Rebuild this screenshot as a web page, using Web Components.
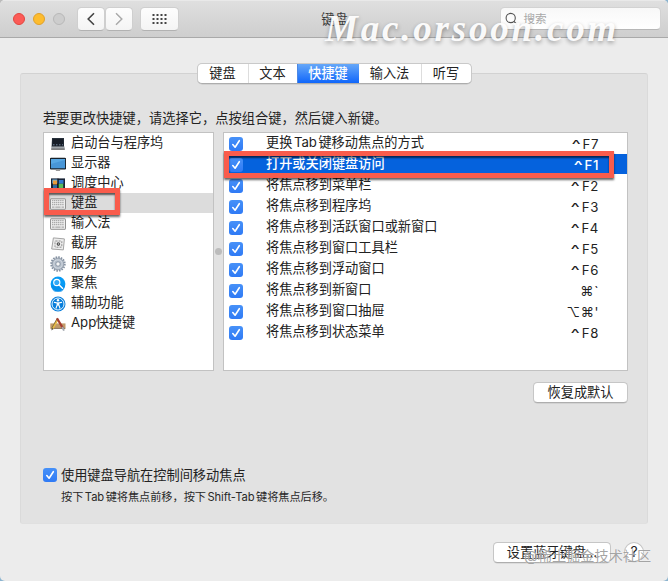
<!DOCTYPE html>
<html lang="zh-CN">
<head>
<meta charset="utf-8">
<title>键盘</title>
<style>
html,body{margin:0;width:668px;height:581px;overflow:hidden;background:#ececec}
body{font:13.2px/20px Inter,"Noto Sans CJK SC",sans-serif;color:#222;background:linear-gradient(135deg,#bbb 0 4px,transparent 4px),#8cb4cf}
</style>
</head>
<body>
<pref-window></pref-window>
<script>
const define=(name,html)=>{
  const t=document.createElement('template');t.innerHTML=html;
  customElements.define(name,class extends HTMLElement{
    constructor(){super();this.attachShadow({mode:'open'}).append(t.content.cloneNode(true));}
  });
};
const icons={
 launch:'<path d="M2 2h12v9H1.6z" fill="#27303b"/><path d="M2.8 3h10.4l.4 7H2.2z" fill="#171d27"/><path d="M1.3 10.5h13.4V13H1.3z" fill="#a1a6ab"/><path d="M3 8.8h1.5M6 8.8h1.5M9 8.8h1.5M12 8.8h1" stroke="#71839b"/><path d="M1.2 13.2h13.6" stroke="#444"/>',
 display:'<rect x=".4" y="2.4" width="15.2" height="10.5" rx=".6" fill="#58a8e4" stroke="#17212b" stroke-width="1.1"/><path d="M1 8l14-4v8H1z" fill="#3e8bcf" opacity=".6"/><path d="M6.5 13.5h3l.9 1.5H5.6z" fill="#999"/>',
 mission:'<rect x="1" y="2.4" width="14" height="11.5" fill="#182335"/><path d="M2.3 3.5h5.3v4H2.3z" fill="#75b8e1"/><path d="M3 4.6h4v4H3z" fill="#e99c3c"/><path d="M8.5 4h5v3.7h-5z" fill="#3178d2"/><path d="M3 9h4.2v3.5H3z" fill="#2d6ba4"/><path d="M8.4 7.8h4.8v4.7H8.4z" fill="#58bb5a"/><path d="M8 2.5v11" stroke="#0c1119"/>',
 keyboard:'<rect x=".5" y="2.8" width="15" height="10.5" rx=".5" fill="#eee" stroke="#929292"/><path d="M2 4.7h12M2 6.7h12M2 8.7h12" stroke="#aaa" stroke-width="1.2" stroke-dasharray="1.3 .6"/><path d="M2 11.2h2.5M5.3 11.2h5.3M11.5 11.2H14" stroke="#aaa" stroke-width="1.2"/>',
 shot:'<path d="M3.4 1.9l11 1-1.1 11-11.6-.9z" fill="#eee" stroke="#a4a4a4"/><rect x="5" y="5" width="6.8" height="6.2" rx=".6" fill="none" stroke="#777" stroke-width=".8" stroke-dasharray="2 1"/><circle cx="8.4" cy="8.1" r="1.8" fill="#555"/><path d="M8 8h1" stroke="#eee"/>',
 gear:'<circle cx="8" cy="8" r="6.7" fill="none" stroke="#8693a3" stroke-width="2" stroke-dasharray="1.6 1.03"/><circle cx="8" cy="8" r="5.8" fill="#b3bdc9" stroke="#8b97a6" stroke-width=".8"/><circle cx="8" cy="8" r="4.1" fill="none" stroke="#d0d7df"/><circle cx="8" cy="8" r="2.2" fill="#f4f5f6" stroke="#7c8999" stroke-width=".8"/>',
 spotlight:'<circle cx="8" cy="8" r="7.4" fill="#079bf5"/><path d="M1 9.5a7 7 0 0014 0z" fill="#0488e7" opacity=".6"/><circle cx="6.8" cy="6.5" r="3.1" fill="#32aaf7" stroke="#fff" stroke-width="1.1"/><path d="M9 8.8l3.5 3.5" stroke="#fff" stroke-width="1.5" stroke-linecap="round"/>',
 access:'<circle cx="8" cy="8" r="7.5" fill="#087edb"/><circle cx="8" cy="8" r="6" fill="none" stroke="#e8f6ff" stroke-width="1"/><circle cx="8" cy="4.3" r="1.2" fill="#fff"/><path d="M4.4 6.4l2.8.6v2L6 12.2M11.6 6.4L8.8 7v2L10 12.2" stroke="#fff" stroke-width="1.1" fill="none" stroke-linecap="round"/><path d="M7.1 6.6h1.8v3H7.1z" fill="#fff"/>',
 app:'<path d="M.3 7.4h15.2v5.2H.3z" fill="#c19b69"/><path d="M.8 12.4h14.4" stroke="#8a755c"/><path d="M7.8 3L2.4 12.8" stroke="#e8bd43" stroke-width="2.2"/><path d="M7.1 2.6L1.8 12" stroke="#5e4e37" stroke-width=".7"/><path d="M2.2 12l-1 2.4 2.3-1.4" fill="#3b3833"/><path d="M7 2.3l5.9 9.8" stroke="#a63d31" stroke-width="2.2"/><path d="M12.2 11l1.8 3.6" stroke="#a3a8af" stroke-width="1.9"/>'
};
customElements.define('pref-icon',class extends HTMLElement{
  connectedCallback(){this.attachShadow({mode:'open'}).innerHTML=`<style>:host{display:block;width:16px;height:16px;flex:none}svg{display:block}</style><svg width="16" height="16" viewBox="0 0 16 16">${icons[this.getAttribute('name')]}</svg>`;}
});
define('latin-run','<style>:host{display:inline;margin:0 1.5px}:host(:empty){margin:0 -.3px}</style><slot></slot>');
define('check-box','<style>:host{display:block;width:14px;height:14px;flex:none;border-radius:3px;background:linear-gradient(#4791f8,#2f7af5)}svg{display:block}</style><svg width="14" height="14" viewBox="0 0 14 14"><path d="M3.8 7.5l2.3 2.7 4.2-6.5" fill="none" stroke="#fff" stroke-width="1.6" stroke-linecap="round" stroke-linejoin="round"/></svg>');
define('push-button','<style>:host{display:flex;align-items:center;justify-content:center;box-sizing:border-box;height:21px;background:#fff;border:1px solid #c6c6c6;border-bottom-color:#aeaeae;border-radius:4.5px;box-shadow:0 .5px .5px #0002;white-space:nowrap;line-height:18px;padding-bottom:1px}</style><slot></slot>');
define('tool-button','<style>:host{display:flex;align-items:center;justify-content:center;box-sizing:border-box;height:24px;background:linear-gradient(#fdfdfd,#f4f4f4);border:1px solid #cfcfcf;border-bottom-color:#b2b2b2;border-radius:4.5px}</style><slot></slot>');
define('title-bar',`<style>
:host{display:flex;align-items:flex-start;box-sizing:border-box;height:38px;padding:6px 7px 0 13px;background:linear-gradient(#dfdfdf,#cecece);border-top:1px solid #e9e9e9;border-bottom:1px solid #a9a9a9}
i{width:12px;height:12px;box-sizing:border-box;border-radius:50%;margin:6px 8px 0 0;border:1px solid}
.r{background:#fc5b57;border-color:#e2463f}.y{background:#fdbc2e;border-color:#e0a02a}.g{background:#cdcdcd;border-color:#b8b8b8}
.back{width:28px;margin-left:4px}.next{width:28px}.all{width:39px;margin-left:7px}
svg{display:block}
.title{flex:1;text-align:center;color:#3d3d3d;line-height:24px;padding-right:10px}
.search{display:flex;align-items:center;box-sizing:border-box;width:161px;height:23px;background:linear-gradient(#f8f8f8,#fff);border:1px solid #d2d2d2;border-bottom-color:#b7b7b7;border-radius:4.5px;padding-left:4px;color:#a9a9a9;font-size:11.6px;gap:5.5px}
</style><i class="r"></i><i class="y"></i><i class="g"></i>
<tool-button class="back"><svg width="12" height="16" viewBox="0 0 12 16"><path d="M9 2.2L3.2 8 9 13.8" stroke="#444" stroke-width="1.6" fill="none"/></svg></tool-button>
<tool-button class="next"><svg width="12" height="16" viewBox="0 0 12 16"><path d="M3 2.2L8.8 8 3 13.8" stroke="#aaa" stroke-width="1.5" fill="none"/></svg></tool-button>
<tool-button class="all"><svg width="15" height="12" viewBox="0 0 15 12"><path d="M.5 2h14M.5 6h14M.5 10h14" stroke="#444" stroke-width="2" stroke-dasharray="2 2"/></svg></tool-button>
<span class="title">键盘</span><span class="search"><svg width="13" height="14" viewBox="0 0 13 14"><circle cx="5.7" cy="6" r="4.6" fill="none" stroke="#555" stroke-width="1.1"/><path d="M9 9.4l3.2 3.4" stroke="#555" stroke-width="1.2"/></svg><span>搜索</span></span>`);
define('tab-strip',`<style>:host{display:grid;grid-template-columns:50px 49px 62px 62px 50px;width:273px;height:19px;border:1px solid #c9c9c9;border-bottom-color:#adadad;border-radius:5px;background:#fff;overflow:hidden;line-height:18px;text-align:center;box-shadow:0 .5px .5px #0002}
span+span{border-left:1px solid #ddd}.on{margin:-1px 0;padding:1px 0;color:#fff;font-weight:500;background:linear-gradient(#6aabf8,#0c63fb);border-color:#4c88e5!important}.on+span{border:0}</style><span>键盘</span><span>文本</span><span class="on">快捷键</span><span>输入法</span><span>听写</span>`);
customElements.define('category-row',class extends HTMLElement{
 connectedCallback(){this.attachShadow({mode:'open'}).innerHTML=`<style>:host{display:flex;align-items:center;height:20px;padding-left:6px;gap:5px}:host([selected]){background:#dcdcdc}pref-icon{margin-top:1px}span{line-height:18px;margin-top:-3px}</style><pref-icon name="${this.getAttribute('icon')}"></pref-icon><span><slot></slot></span>`;}
});
customElements.define('shortcut-row',class extends HTMLElement{
 connectedCallback(){
  const key=this.getAttribute('key');
  this.attachShadow({mode:'open'}).innerHTML=`<style>:host{display:flex;align-items:center;height:20px;margin-bottom:1px;padding:0 29px 0 5px}:host([selected]){background:#0562dd;color:#fff;font-weight:500}check-box{margin-top:2px}.n{flex:1;margin-left:23px;line-height:18px;margin-top:-3px}.k{letter-spacing:.6px;line-height:18px;margin-top:1px;margin-right:-1px}.c{display:inline-block;transform:scaleX(1.5);transform-origin:100% 50%;margin-right:1px}</style><check-box></check-box><span class="n"><slot></slot></span><span class="k"></span>`;
  const k=this.shadowRoot.querySelector('.k');
  if(key[0]==='^'){const c=document.createElement('span');c.className='c';c.textContent='^';k.append(c,key.slice(1));}
  else k.textContent=key;
 }
});
define('category-list',`<style>:host{display:block;box-sizing:border-box;width:171px;height:239px;background:#fff;border:1px solid #c2c2c2}</style>
<category-row icon="launch">启动台与程序坞</category-row><category-row icon="display">显示器</category-row><category-row icon="mission">调度中心</category-row><category-row icon="keyboard" selected>键盘</category-row><category-row icon="keyboard">输入法</category-row><category-row icon="shot">截屏</category-row><category-row icon="gear">服务</category-row><category-row icon="spotlight">聚焦</category-row><category-row icon="access">辅助功能</category-row><category-row icon="app">App<latin-run></latin-run>快捷键</category-row>`);
define('shortcut-list',`<style>:host{display:block;box-sizing:border-box;width:405px;height:239px;background:#fff;border:1px solid #c2c2c2}</style>
<shortcut-row key="^F7">更换<latin-run>Tab</latin-run>键移动焦点的方式</shortcut-row><shortcut-row selected key="^F1">打开或关闭键盘访问</shortcut-row><shortcut-row key="^F2">将焦点移到菜单栏</shortcut-row><shortcut-row key="^F3">将焦点移到程序坞</shortcut-row><shortcut-row key="^F4">将焦点移到活跃窗口或新窗口</shortcut-row><shortcut-row key="^F5">将焦点移到窗口工具栏</shortcut-row><shortcut-row key="^F6">将焦点移到浮动窗口</shortcut-row><shortcut-row key="⌘&#96;">将焦点移到新窗口</shortcut-row><shortcut-row key="⌥⌘'">将焦点移到窗口抽屉</shortcut-row><shortcut-row key="^F8">将焦点移到状态菜单</shortcut-row>`);
define('pref-panel',`<style>
:host{display:flex;flex-direction:column;box-sizing:border-box;margin:0 20px;height:451px;padding:0 19px 0 22px;background:#e2e2e2;border:1px solid #dadada;border-top-color:#d2d2d2;border-bottom-color:#e0e0e0;border-radius:3px}
tab-strip{align-self:center;margin:-11px 3px 0 0}
.hint{margin-top:24px;height:20px;margin-bottom:4px;font-size:13.2px;letter-spacing:.06px}
.lists{display:flex;align-items:center}.dot{width:7px;height:7px;border-radius:50%;background:#bcbcbc;margin:0 1px}
push-button{width:95px;align-self:flex-end;margin-top:11px}
.opt{display:flex;gap:4px;align-items:center;margin-top:62px}
.sub{font-size:11.2px;margin:2px 0 0 18px;color:#292929;letter-spacing:-.05px}
</style><tab-strip></tab-strip><div class="hint">若要更改快捷键，请选择它，点按组合键，然后键入新键。</div><div class="lists"><category-list></category-list><span class="dot"></span><shortcut-list></shortcut-list></div><push-button>恢复成默认</push-button><div class="opt"><check-box></check-box><span>使用键盘导航在控制间移动焦点</span></div><div class="sub">按下<latin-run>Tab</latin-run>键将焦点前移，按下<latin-run>Shift-Tab</latin-run>键将焦点后移。</div>`);
define('mark-frame','<style>:host{display:block;position:absolute;box-sizing:border-box;border:5px solid #f95c4c;box-shadow:0 2px 2px #0009,inset 0 2px 2px #0009}</style>');
define('pref-window',`<style>
:host{display:block;position:relative;width:668px;height:581px;background:#ececec;border-radius:5px;overflow:hidden}
pref-panel{margin-top:35px}
footer{display:flex;justify-content:flex-end;gap:13px;padding:18px 24px 0 0;height:24px}
.bt{width:118px;height:21px}.help{width:20px;height:20px;border-radius:50%;font-size:14px;margin-top:0}
.l{left:44px;top:188px;width:76px;height:27px}.r{left:224px;top:151px;width:390px;height:27px}
.site{position:absolute;left:325px;top:7px;font:italic bold 37px/44px "Liberation Serif",serif;letter-spacing:2.8px;color:#fffffff0;text-shadow:0 2px 4px #0005;white-space:nowrap}
.credit{position:absolute;left:524px;top:546px;font-size:14.2px;line-height:20px;color:#777a;white-space:nowrap;text-shadow:0 0 1px #fff}
</style><title-bar></title-bar><pref-panel></pref-panel><footer><push-button class="bt">设置蓝牙键盘…</push-button><push-button class="help">?</push-button></footer>
<mark-frame class="l"></mark-frame><mark-frame class="r"></mark-frame><span class="site">Mac.orsoon.com</span><span class="credit">@稀土掘金技术社区</span>`);
</script>
</body>
</html>
